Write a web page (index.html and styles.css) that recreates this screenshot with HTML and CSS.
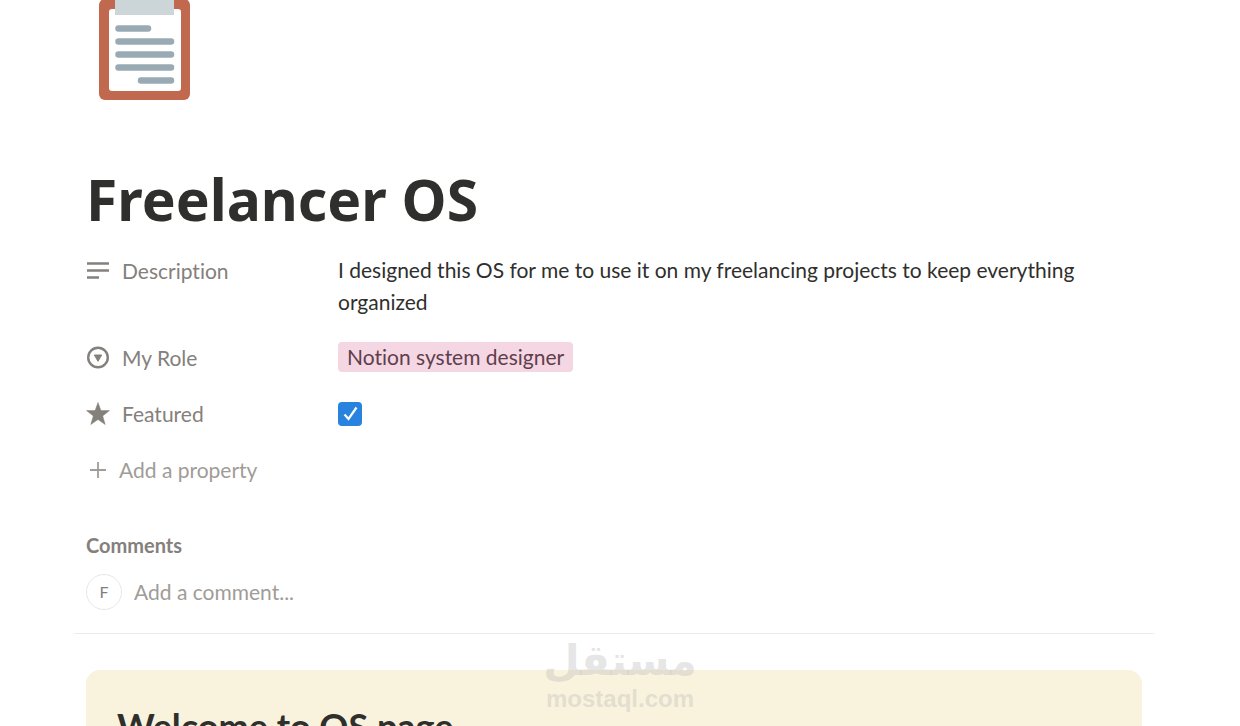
FILE: index.html
```html
<!DOCTYPE html>
<html lang="en">

<head>
  <meta charset="UTF-8" />
  <meta name="viewport" content="width=device-width, initial-scale=1.0"/>
  <title>Freelancer OS</title>
  <link rel="stylesheet" href="styles.css">
</head>
<body>
  <main class="page">
    <header>
      <svg class="page-icon" viewBox="0 0 92 100" aria-hidden="true">
        <rect x="0" y="-1" width="91" height="101" rx="6" fill="#c1694f"/>
        <rect x="10" y="9" width="72" height="82" rx="3" fill="#fff"/>
        <rect x="16" y="-10" width="59" height="25" fill="#ccd6d9"/>
        <g stroke="#99aab5" stroke-width="6.5" stroke-linecap="round">
          <path d="M19.500 28.500H49M19.500 41.500H72M19.500 54.500H72M19.500 67.500H72M42 80.500H72"/>
        </g>
      </svg>
      <h1>Freelancer OS</h1>
    </header>

    <section class="properties">
      <div class="property">
        <div class="name">
          <svg viewBox="0 0 24 24" aria-hidden="true"><path d="M1 4.500H23M1 11.500H23M1 18.500H13" stroke="currentColor" stroke-width="2.500"/></svg>
          Description
        </div>
        <p class="value">I designed this OS for me to use it on my freelancing projects to keep everything organized</p>
      </div>

      <div class="property">
        <div class="name">
          <svg viewBox="0 0 24 24" aria-hidden="true"><circle cx="12" cy="11.500" r="9.800" fill="none" stroke="currentColor" stroke-width="2.400"/><path d="M8.300 9H15.700L12 15.300Z" fill="currentColor" stroke="currentColor" stroke-linejoin="round"/></svg>
          My Role
        </div>
        <div class="value"><span class="tag">Notion system designer</span></div>
      </div>

      <div class="property">
        <label class="name" for="featured">
          <svg viewBox="0 0 24 24" aria-hidden="true"><path d="M12 .5L14.900 8.600H23.500L16.700 13.900L19.200 22.500L12 17.500L4.800 22.500L7.300 13.900L.5 8.600H9.100Z" fill="currentColor" stroke="currentColor" stroke-width=".5" stroke-linejoin="round"/></svg>
          Featured
        </label>
        <div class="value check">
          <input type="checkbox" id="featured" checked>
          <svg viewBox="0 0 24 24" aria-hidden="true"><path d="M6.500 12.500L10.500 17L18.500 5.500" fill="none" stroke="#fff" stroke-width="2.200"/></svg>
        </div>
      </div>

      <button class="add-property" type="button">
        <svg viewBox="0 0 24 24" aria-hidden="true"><path d="M4 12H20M12 4V20" stroke="currentColor" stroke-width="1.800"/></svg>
        Add a property
      </button>
    </section>

    <section class="comments">
      <h2>Comments</h2>
      <div class="comment-row">
        <span class="avatar">F</span>
        <input type="text" placeholder="Add a comment..." aria-label="Add a comment">
      </div>
    </section>

    <section class="callout">
      <h2>Welcome to OS page</h2>
    </section>
  </main>

  <div class="watermark">
    <span class="ar" lang="ar" dir="rtl">مستقل</span>
    <span class="en">mostaql.com</span>
  </div>
</body>
</html>
```

FILE: styles.css
```css
* {
  margin: 0;
  padding: 0;
  box-sizing: border-box;
}

body {
  background: #fff;
  color: #2f2f2d;
  font-family: Lato, sans-serif;
  font-size: 21px;
  line-height: 32px;
  font-variant-ligatures: none;
}

input, button {
  font: inherit;
  border: none;
  background: none;
}

.page {
  margin: 0 98px 0 86px;
}

.page-icon {
  display: block;
  width: 92px;
  height: 100px;
  margin-left: 13px;
}

h1 {
  margin-top: 63px;
  font-family: "Noto Sans", sans-serif;
  font-size: 57px;
  line-height: 72px;
  font-weight: 700;
}

.properties {
  display: flex;
  flex-direction: column;
  align-items: stretch;
  gap: 11px;
  margin-top: 13px;
}

.property {
  display: grid;
  grid-template-columns: 252px 1fr;
}

.name {
  display: flex;
  align-items: center;
  gap: 12px;
  height: 45px;
  color: #84807c;
}

.name svg,
.add-property svg {
  width: 24px;
  height: 24px;
  flex: none;
}

.value {
  padding: 6px 0;
}

.tag {
  display: inline-block;
  padding: 0 9px;
  border-radius: 4px;
  background: #f4d7e3;
  color: #5f3e4d;
  line-height: 30px;
}

.check {
  position: relative;
  display: flex;
  align-items: center;
}

.check input {
  appearance: none;
  width: 24px;
  height: 24px;
  border-radius: 4px;
  background: #2783de;
}

.check svg {
  position: absolute;
  left: 0;
  width: 24px;
  height: 24px;
  pointer-events: none;
}

.add-property {
  display: flex;
  align-items: center;
  align-self: flex-start;
  gap: 9px;
  height: 45px;
  color: #a09c98;
  cursor: pointer;
}

.comments {
  margin: 35px -12px 0;
  padding: 0 12px 23px;
  border-bottom: 1px solid #ececeb;
}

.comments h2 {
  color: #84807c;
  font-size: 20px;
  line-height: 36px;
  font-weight: 700;
}

.comment-row {
  display: flex;
  align-items: center;
  gap: 12px;
  margin-top: 11px;
}

.avatar {
  width: 36px;
  height: 36px;
  border: 1px solid #e8e7e6;
  border-radius: 50%;
  color: #84807c;
  font-size: 16px;
  line-height: 34px;
  text-align: center;
}

.comment-row input {
  flex: 1;
  outline: none;
}

.comment-row input::placeholder {
  color: #a09c98;
}

.callout {
  margin-top: 36px;
  padding: 32px 31px;
  border-radius: 14px;
  background: #f9f2dc;
}

.callout h2 {
  font-size: 36px;
  line-height: 48px;
  font-weight: 700;
}

/* site stamp over the page */
.watermark {
  position: absolute;
  top: 637px;
  left: 50%;
  display: flex;
  flex-direction: column;
  align-items: center;
  transform: translateX(-50%);
  color: rgba(190, 190, 190, 0.4);
  font-weight: 700;
  pointer-events: none;
}

.watermark .ar {
  font-family: "DejaVu Sans", sans-serif;
  font-size: 42px;
  line-height: 48px;
}

.watermark .en {
  font-family: "Liberation Sans", sans-serif;
  font-size: 24px;
  line-height: 28px;
}
```
